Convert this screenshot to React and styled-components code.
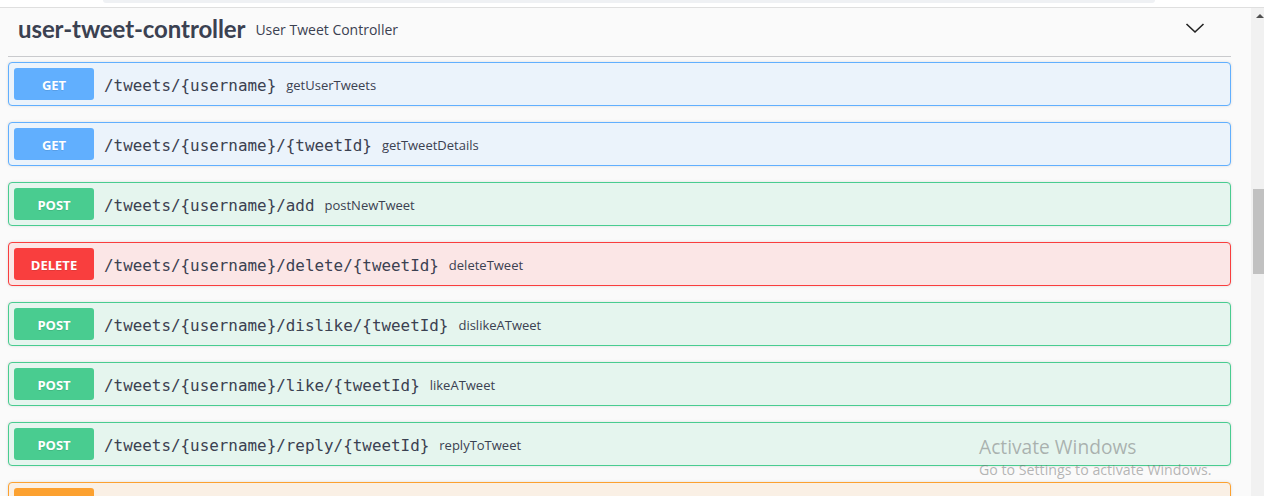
import React from 'react';
import styled, { createGlobalStyle } from 'styled-components';

const GlobalStyle = createGlobalStyle`
  html, body {
    margin: 0;
    padding: 0;
    background: #fff;
    overflow: hidden;
  }
`;

const METHOD_COLORS = {
  GET: '#61affe',
  POST: '#49cc90',
  DELETE: '#f93e3e',
  PUT: '#fca130',
};

const METHOD_BG = {
  GET: '#ebf3fb',
  POST: '#e5f5ee',
  DELETE: '#fbe6e6',
  PUT: '#faf0e5',
};

const operations = [
  { method: 'GET', path: '/tweets/{username}', id: 'getUserTweets' },
  { method: 'GET', path: '/tweets/{username}/{tweetId}', id: 'getTweetDetails' },
  { method: 'POST', path: '/tweets/{username}/add', id: 'postNewTweet' },
  { method: 'DELETE', path: '/tweets/{username}/delete/{tweetId}', id: 'deleteTweet' },
  { method: 'POST', path: '/tweets/{username}/dislike/{tweetId}', id: 'dislikeATweet' },
  { method: 'POST', path: '/tweets/{username}/like/{tweetId}', id: 'likeATweet' },
  { method: 'POST', path: '/tweets/{username}/reply/{tweetId}', id: 'replyToTweet' },
  // scrolled past the bottom edge, only its top border shows
  { method: 'PUT', id: 'put-cut' },
];

const Page = styled.div`
  position: relative;
  height: 496px;
  display: flex;
  flex-direction: column;
  overflow: hidden;
`;

const TopStrip = styled.div`
  height: 7px;
  flex-shrink: 0;
  background: #fff;
  border-bottom: 1px solid #dfdfdf;
  padding: 0 109px 0 103px;
`;

const TopBox = styled.div`
  height: 3px;
  background: #eff1f4;
  border-radius: 0 0 6px 6px;
`;

const Body = styled.div`
  flex: 1;
  display: flex;
  min-height: 0;
`;

const Content = styled.div`
  flex: 1;
  background: #fafafa;
  padding: 0 20px 0 8px;
  font-family: "Open Sans", sans-serif;
  color: #3b4151;
`;

const TagHeader = styled.div`
  height: 49px;
  box-sizing: border-box;
  display: flex;
  align-items: center;
  padding: 0 10px 8px;
  border-bottom: 1px solid #c9cacd;
  margin-bottom: 5px;
`;

const TagName = styled.h3`
  margin: 0;
  font-family: "Lato", "Open Sans", sans-serif;
  font-size: 24px;
  font-weight: 700;
  letter-spacing: -0.1px;
  color: #3b4151;
`;

const TagDesc = styled.small`
  flex: 1;
  margin-left: 10px;
  font-size: 14px;
  padding-top: 2px;
`;

const Chevron = styled.svg`
  width: 20px;
  height: 20px;
  margin-right: 16px;
`;

const OpBlock = styled.div`
  height: 44px;
  box-sizing: border-box;
  display: flex;
  align-items: center;
  padding: 0 5px;
  margin-bottom: 16px;
  border: 1px solid ${(p) => METHOD_COLORS[p.$method]};
  background: ${(p) => METHOD_BG[p.$method]};
  border-radius: 4px;
  box-shadow: 0 0 3px rgba(0, 0, 0, 0.12);
`;

const MethodBadge = styled.span`
  width: 80px;
  height: 32px;
  flex-shrink: 0;
  display: flex;
  align-items: center;
  justify-content: center;
  border-radius: 3px;
  background: ${(p) => METHOD_COLORS[p.$method]};
  color: #fff;
  font-size: 13px;
  font-weight: 700;
  padding-top: 1px;
  box-sizing: border-box;
  text-shadow: 0 1px 0 rgba(0, 0, 0, 0.1);
`;

const OpPath = styled.span`
  padding: 2px 10px 0;
  font-family: "DejaVu Sans Mono", "Liberation Mono", monospace;
  font-size: 15.9px;
  color: #3b4151;
`;

const OpId = styled.span`
  padding-top: 2px;
  font-size: 13px;
  color: #3b4151;
`;

const Scrollbar = styled.div`
  width: 13px;
  flex-shrink: 0;
  background: #f1f1f1;
  display: flex;
  flex-direction: column;
  align-items: flex-end;
`;

const ScrollArrow = styled.div`
  align-self: center;
  margin: 6px 0 0 4px;
  width: 0;
  height: 0;
  border-left: 4px solid transparent;
  border-right: 4px solid transparent;
  border-bottom: 4px solid #505050;
`;

const ScrollThumb = styled.div`
  margin-top: 171px;
  width: 11px;
  height: 85px;
  background: #c1c1c1;
`;

const Watermark = styled.div`
  position: absolute;
  left: 979px;
  top: 434px;
  font-family: "Open Sans", sans-serif;
  color: rgba(110, 110, 110, 0.5);
  pointer-events: none;
`;

const WatermarkTitle = styled.div`
  font-size: 19.2px;
  line-height: 26px;
`;

const WatermarkSub = styled.div`
  font-size: 14.2px;
  line-height: 20px;
`;

export default function App() {
  return (
    <Page>
      <GlobalStyle />
      <TopStrip>
        <TopBox />
      </TopStrip>
      <Body>
        <Content>
          <TagHeader>
            <TagName>user-tweet-controller</TagName>
            <TagDesc>User Tweet Controller</TagDesc>
            <Chevron viewBox="0 0 20 20">
              <polyline points="1.5,6 10,14 18.5,6" fill="none" stroke="#222" strokeWidth="1.6" />
            </Chevron>
          </TagHeader>
          {operations.map((op) => (
            <OpBlock key={op.id} $method={op.method}>
              <MethodBadge $method={op.method}>{op.path ? op.method : null}</MethodBadge>
              {op.path ? (
                <>
                  <OpPath>{op.path}</OpPath>
                  <OpId>{op.id}</OpId>
                </>
              ) : null}
            </OpBlock>
          ))}
        </Content>
        <Scrollbar>
          <ScrollArrow />
          <ScrollThumb />
        </Scrollbar>
      </Body>
      <Watermark>
        <WatermarkTitle>Activate Windows</WatermarkTitle>
        <WatermarkSub>Go to Settings to activate Windows.</WatermarkSub>
      </Watermark>
    </Page>
  );
}
